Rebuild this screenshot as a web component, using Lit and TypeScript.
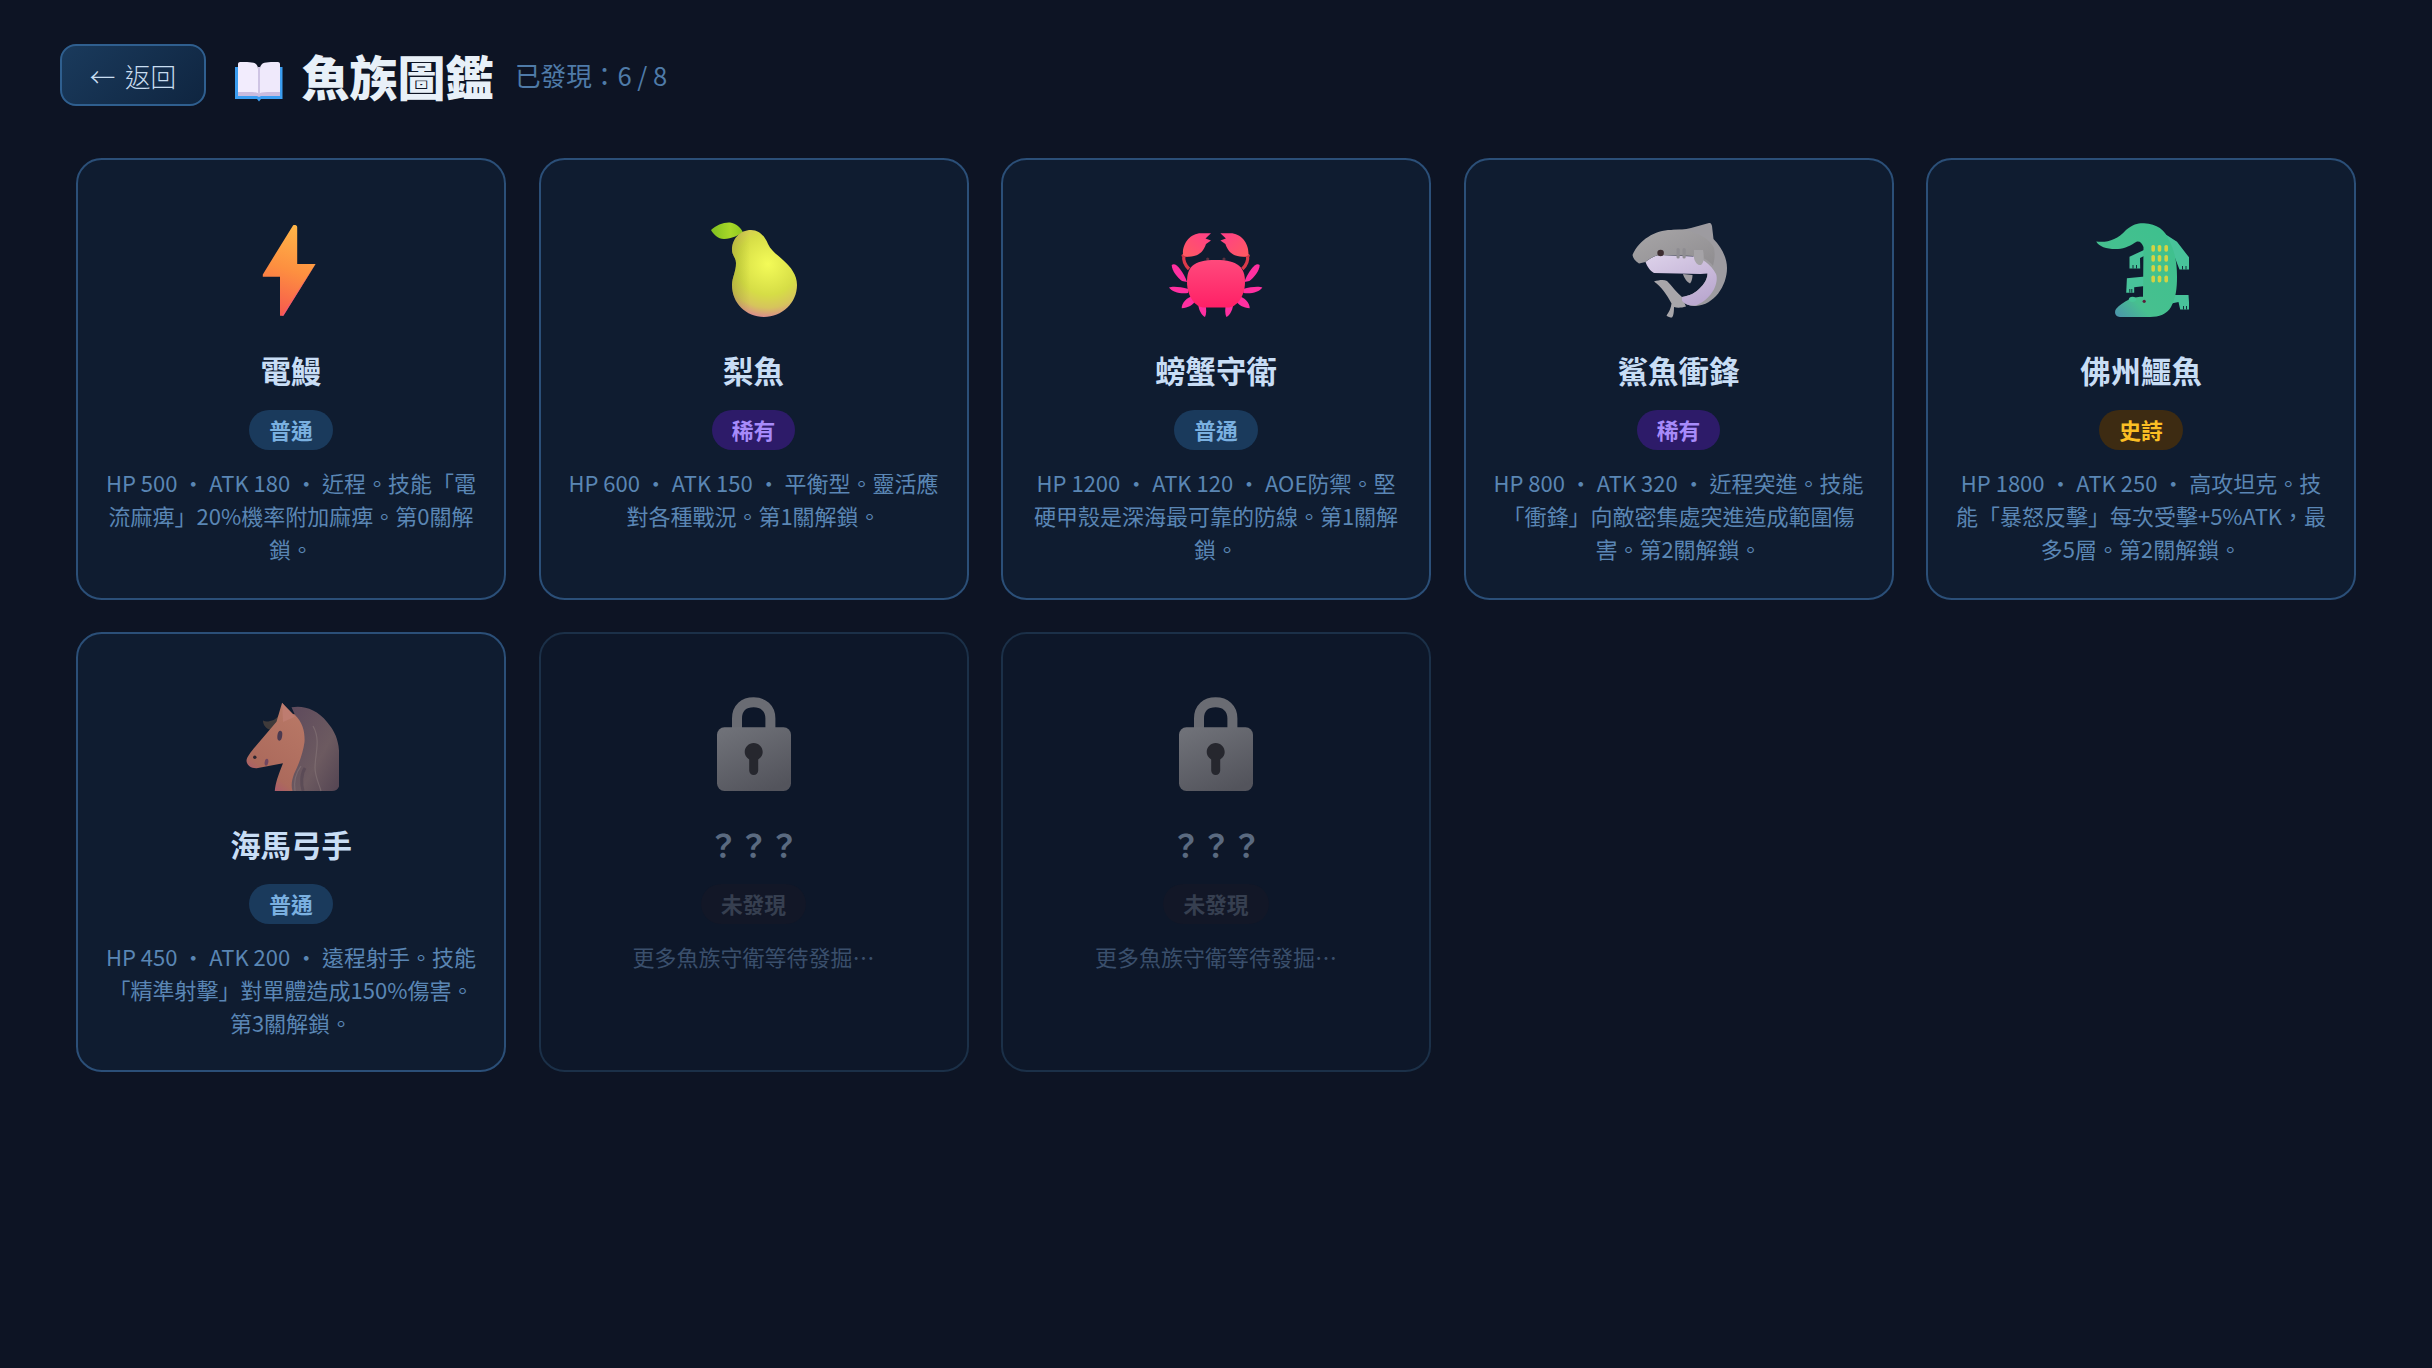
import { LitElement, html, css, svg } from "lit";
import { customElement } from "lit/decorators.js";

const defs = svg`
<svg width="0" height="0" class="defs" aria-hidden="true"><defs>
  <linearGradient id="bolt" x1="0.6" y1="0" x2="0.4" y2="1"><stop offset="0" stop-color="#ffb648"/><stop offset="0.5" stop-color="#fd8f40"/><stop offset="1" stop-color="#f65a4e"/></linearGradient>
  <radialGradient id="pear" gradientUnits="userSpaceOnUse" cx="62" cy="42" r="56"><stop offset="0" stop-color="#f3fb58"/><stop offset="0.55" stop-color="#d6dd46"/><stop offset="0.78" stop-color="#d6c45c"/><stop offset="1" stop-color="#dc7f98"/></radialGradient>
  <linearGradient id="pearShade" x1="0" y1="0" x2="1" y2="0"><stop offset="0" stop-color="#8a9a20" stop-opacity="0.4"/><stop offset="0.28" stop-color="#8a9a20" stop-opacity="0"/></linearGradient>
  <linearGradient id="leaf" x1="0" y1="0" x2="1" y2="0"><stop offset="0" stop-color="#7fbf20"/><stop offset="0.6" stop-color="#a8d828"/><stop offset="1" stop-color="#8ec820"/></linearGradient>
  <linearGradient id="crabBody" x1="0.5" y1="0" x2="0.5" y2="1"><stop offset="0" stop-color="#ff4a7c"/><stop offset="1" stop-color="#ff2066"/></linearGradient>
  <linearGradient id="crabClaw" x1="0" y1="1" x2="1" y2="0"><stop offset="0" stop-color="#ff5a60"/><stop offset="1" stop-color="#ff3f88"/></linearGradient>
  <linearGradient id="sharkTop" x1="0" y1="0" x2="1" y2="1"><stop offset="0" stop-color="#a8a6a8"/><stop offset="1" stop-color="#8f8d90"/></linearGradient>
  <linearGradient id="sharkBelly" x1="0" y1="0" x2="0.6" y2="1"><stop offset="0" stop-color="#ddd2ea"/><stop offset="1" stop-color="#bba9d0"/></linearGradient>
  <linearGradient id="croc" x1="0.9" y1="0.2" x2="0.2" y2="1"><stop offset="0" stop-color="#3fc08e"/><stop offset="0.7" stop-color="#47c08f"/><stop offset="1" stop-color="#4c8fb0"/></linearGradient>
  <linearGradient id="horseSkin" x1="0.7" y1="0" x2="0.2" y2="1"><stop offset="0" stop-color="#b87866"/><stop offset="0.75" stop-color="#ac6a5c"/><stop offset="1" stop-color="#a84e78"/></linearGradient>
  <linearGradient id="mane" x1="0" y1="0" x2="1" y2="1"><stop offset="0" stop-color="#5e4a5c"/><stop offset="0.6" stop-color="#6c5a60"/><stop offset="1" stop-color="#534452"/></linearGradient>
  <linearGradient id="lockBody" x1="0.2" y1="0" x2="0.7" y2="1"><stop offset="0" stop-color="#6f7178"/><stop offset="1" stop-color="#53545c"/></linearGradient>
</defs></svg>`;

const bolt = svg`<svg class="icon" viewBox="0 0 96 96"><path fill="url(#bolt)" d="M50 3.4C51 2.6 54 2.8 54.2 5L54.2 42L72.6 42L40.4 93.8L37 93.8L37 54.7L19.8 54.7L19.8 52.4Z"/><path fill="#f2577a" opacity="0.7" d="M72.6 42L40.4 93.8L38.4 93.8Z"/></svg>`;

const pear = svg`<svg class="icon" viewBox="0 0 96 96">
  <path fill="url(#leaf)" d="M5 8C10 3 18 0 24 .5C30 1 35 6 37 10.500C32 13 26 17 18 17C12 17 7 12 5 8Z"/>
  <path fill="url(#pear)" d="M45 8C54 8 59 15 62 22C65 29 72 33 77 38C85 45 91 53 91 63C91 81 76 95 58 95C40 95 26 81 26 63C26 55 30 50 30 41C30 36 26 33 26 28C26 17 34 8 45 8Z"/>
  <path fill="url(#pearShade)" d="M45 8C54 8 59 15 62 22C65 29 72 33 77 38C85 45 91 53 91 63C91 81 76 95 58 95C40 95 26 81 26 63C26 55 30 50 30 41C30 36 26 33 26 28C26 17 34 8 45 8Z"/>
</svg>`;

const crabSide = svg`
  <path fill="none" stroke="#d93a4a" stroke-width="3.200" d="M16 33C15 38 17 43 21 47"/>
  <rect x="13.500" y="32" width="7" height="3" rx="1.500" fill="#c93848"/>
  <path fill="url(#crabClaw)" d="M15 33C14 22 22 11.300 33 11.300L43 11.300L37.500 16.500L43 18.500L38 22C36 28 32 33 26 34C22 35 17 35 15 33Z"/>
  <g fill="#ff30a0">
    <path d="M3.700 43C6 41 9 43 12 47C15 51 17.500 55 19 60L14 59C9 55 4 49 3.700 43Z"/>
    <path d="M1 65.500C4 64 12 64.500 20.500 67L20 71C12 72 4 70 1 65.500Z"/>
    <path d="M13.700 86.300C13.500 81 19 75 26 73.500L28.500 78C25 83 20 86 13.700 86.300Z"/>
    <path d="M37 95C33.500 93.500 30 87 30 80L37.500 82.500C38.500 87 38.500 92 37 95Z"/>
  </g>`;
const crab = svg`<svg class="icon" viewBox="0 0 96 96">
  ${crabSide}
  <g transform="translate(95.400 0) scale(-1 1)">${crabSide}</g>
  <circle cx="39.700" cy="37" r="1.600" fill="#5a3040"/><circle cx="56" cy="37" r="1.600" fill="#5a3040"/>
  <path fill="url(#crabBody)" d="M19 60C19 46 24 38 47.700 38C71 38 77 46 77 60C77 75 68 85.500 60 85.500L36 85.500C28 85.500 19 75 19 60Z"/>
</svg>`;

const shark = svg`<svg class="icon" viewBox="0 0 96 96">
  <path fill="#a09da2" d="M52 52L61.500 53C61.500 57 60 60.500 59 61.500C56 60 53 56 52 52Z"/>
  <path fill="#a8a6aa" d="M23 59.500C28 58 33 57.500 36 59C41 64 46 71 51 75L55 84.500C50 86 46 86 43 85C43 90 42.500 94 41 95.500C39 95.500 37 95 35.500 93.500C38 90 40 86 40.500 81.500C36 73 30 64 23 59.500Z"/>
  <path fill="#9d9ba0" d="M40 8C47 7.500 54 8 60 6L78 1C80 .5 80.500 2 81 4L82.500 17C91 26 96 36 96 46C96 64 83 83 65 84C60 84.500 55 83 51 79L51 75C58 74 65 71 70 65C75 60 76.500 55 76.500 51L50 20Z"/>
  <path fill="url(#sharkBelly)" d="M14.500 40C18 37 24 33 29 33L63 34.500C70 36 80 42 85 52C88 60 82 76 66 83C60 84.500 55 83 51 79L51 75C58 74 65 71 70 65C75 60 76.500 55 76.500 51.500L69.500 52L23 51C19 49 16 44 14.500 40Z"/>
  <path fill="url(#sharkTop)" d="M1.500 33C8 18 24 8 40 8C58 6 78 14 83 26C84 32 84 36 82 44C78 38 70 34 63 34L29 33C24 33 18 37 14.500 40L8 41.500C4 39 2 36 1.500 33Z"/>
  <path fill="#a5a3a7" d="M63 28L72 28C73 34 73.500 40 70 43C66 43.500 64 40 63 36Z"/>
  <circle cx="29.600" cy="31" r="3.300" fill="#3c2c30"/>
  <rect x="45.500" y="26" width="3.200" height="10.500" rx="1.600" fill="#8f8d92"/>
  <rect x="51.500" y="26" width="3.200" height="10.500" rx="1.600" fill="#8f8d92"/>
</svg>`;

const scutes = [60.2, 66.5, 73.2].flatMap((x) =>
  [26.3, 36.3, 46.3, 57].map((y) =>
    svg`<rect x="${x - 1.8}" y="${y - 3.4}" width="3.600" height="6.800" rx="1.600" fill="#d3d243"/>`
  )
);
const croc = svg`<svg class="icon" viewBox="0 0 96 96">
  <g fill="#48c39a">
    <path d="M72 12L84 19.700L96.500 36L96.500 47.500L86.500 47.500L82 36L76 34Z"/>
    <path d="M51 28L36.500 34.700L36.500 46.500L47.200 46.500L47 36L51 34Z"/>
    <path d="M52 54.500L33.900 56.300L33.200 70.700L41.200 70.700L41.200 65.300L52 64Z"/>
    <path d="M80 73L95.500 73L96.500 87.500L87.200 87.500L85.500 80L76 82Z"/>
  </g>
  <g stroke="#0f1c30" stroke-width="0.900">
    <path d="M89.500 44L89.500 47.500M93 44L93 47.500M40 43L40 46.500M43.500 43L43.500 46.500M36.800 67L36.800 70.700M38.800 67L38.800 70.700M90.500 84L90.500 87.500M93.500 84L93.500 87.500"/>
  </g>
  <path fill="url(#croc)" d="M3.200 19.500C14 21 24 18 33 8C40 2 46 1 51 1.300C64 2 72 8 76 18C82 30 84 40 84 55C84 66 83 76 78 85C74 92 66 95 57 95L27 95C22 94.500 21 90 23 87C26 83 31 80 37 77C42 75 46 74.700 50 74.700L50.500 25C49 21 47 19 44 19.500C38 23 32 27 25 27C15 27.500 6 25 3.200 19.500Z"/>
  <ellipse cx="39.500" cy="77.300" rx="3.600" ry="2.600" fill="#48c598"/>
  <circle cx="51.200" cy="79.300" r="1.600" fill="#5a1f3a"/>
  ${scutes}
</svg>`;

const horse = svg`<svg class="icon" viewBox="0 0 96 96">
  <path fill="#3f3a3a" d="M38 13C37 20 33 24 27 25C24 26 22 25.500 20 24.500C20 29 23 33 28 34C33 33 37 28 41 22Z"/>
  <path fill="url(#horseSkin)" d="M39 7L50 18L62 20L62 95L31.800 95C32.500 87 35 80 40 67.300L15 72C9 73 4 70 3.500 65C3.500 61 8 56 12 51L33.500 25.700Z"/>
  <path fill="#be7c70" d="M39 6.700L52 20.700L40 26Z"/>
  <path fill="url(#mane)" d="M48.500 11.300C60 9 74 13 84 26C90 33 94 40 95.500 50C96.800 60 96.800 75 96.500 88C96 93 93 95 89 95L49.500 95C48 90 48.500 85 51 78C56 68 60 57 61.500 46C62 36 60 27 52 19Z"/>
  <g fill="none" stroke="#8a7a7c" stroke-width="1.200" opacity="0.55">
    <path d="M70 30C78 44 72 58 72 72C72 80 76 88 78 95"/>
    <path d="M58 70C52 78 51 88 52 95"/>
  </g>
  <g fill="none" stroke="#4a3c4c" stroke-width="3" opacity="0.45"><path d="M62 72C58 78 58 88 60 95"/></g>
  <ellipse cx="36.800" cy="39.700" rx="2.400" ry="5" fill="#4b3a50" transform="rotate(8 36.800 39.700)"/>
  <circle cx="11.800" cy="61.300" r="1.700" fill="#2e2630"/>
  <ellipse cx="23.500" cy="66.300" rx="1.800" ry="3.600" fill="#6e4660" transform="rotate(10 23.500 66.300)"/>
</svg>`;

const lock = svg`<svg class="icon" viewBox="0 0 96 96">
  <path fill="none" stroke="#6a6c73" stroke-width="10" d="M31 34L31 22.500C31 12 38 6.300 47.700 6.300C57 6.300 64.400 12 64.400 22.500L64.400 34"/>
  <rect x="11" y="31.300" width="74" height="63.700" rx="7.500" fill="url(#lockBody)"/>
  <path fill="#26272e" d="M47.700 47C52.700 47 56.700 51 56.700 56C56.700 59 55.500 61 52.200 63.500L52.200 74.500C52.200 77 50.200 79 47.700 79C45.200 79 43.200 77 43.200 74.500L43.200 63.500C40 61 38.700 59 38.700 56C38.700 51 42.700 47 47.700 47Z"/>
</svg>`;

const book = svg`<svg class="book" viewBox="0 0 48 40">
  <path fill="#3b9df0" d="M0 5L3 5L3 32L45 32L45 5L47.500 5L47.500 37L26 37L24 39.500L22 37L0 37Z"/>
  <path fill="#c9bcdf" d="M3 28L24 30L45 28L45 34L26 34L24 35L22 34L3 34Z"/>
  <path fill="#f2ecfd" d="M5 0C11 0 19 0 21 2C22.500 3.500 23 5 23 7L23 31C20 29.500 11 30 3 30L3 2C3 .8 4 0 5 0Z"/>
  <path fill="#efe9fb" d="M43 0C37 0 29 0 27 2C25.500 3.500 25 5 25 7L25 31C28 29.500 37 30 45 30L45 2C45 .8 44 0 43 0Z"/>
  <path fill="#cfc4e4" d="M23 5L25 5L25 32L23 32Z"/>
</svg>`;

type Tier = "common" | "rare" | "epic";
const tierLabel: Record<Tier, string> = { common: "普通", rare: "稀有", epic: "史詩" };

const fish = [
  { icon: bolt, name: "電鰻", tier: "common" as Tier, desc: "HP 500 ・ ATK 180 ・ 近程。技能「電流麻痺」20%機率附加麻痺。第0關解鎖。" },
  { icon: pear, name: "梨魚", tier: "rare" as Tier, desc: "HP 600 ・ ATK 150 ・ 平衡型。靈活應對各種戰況。第1關解鎖。" },
  { icon: crab, name: "螃蟹守衛", tier: "common" as Tier, desc: "HP 1200 ・ ATK 120 ・ AOE防禦。堅硬甲殼是深海最可靠的防線。第1關解鎖。" },
  { icon: shark, name: "鯊魚衝鋒", tier: "rare" as Tier, desc: "HP 800 ・ ATK 320 ・ 近程突進。技能「衝鋒」向敵密集處突進造成範圍傷害。第2關解鎖。" },
  { icon: croc, name: "佛州鱷魚", tier: "epic" as Tier, desc: "HP 1800 ・ ATK 250 ・ 高攻坦克。技能「暴怒反擊」每次受擊+5%ATK，最多5層。第2關解鎖。" },
  { icon: horse, name: "海馬弓手", tier: "common" as Tier, desc: "HP 450 ・ ATK 200 ・ 遠程射手。技能「精準射擊」對單體造成150%傷害。第3關解鎖。" },
];

@customElement("app-root")
export class AppRoot extends LitElement {
  static styles = css`
    :host {
      display: block;
      min-height: 100vh;
      background: #0d1424;
      font-family: "Noto Sans CJK TC", "Noto Sans", sans-serif;
    }
    .defs { position: absolute; }
    .page { padding: 44px 60px; box-sizing: border-box; }
    .header { display: flex; align-items: center; height: 62px; }
    .back {
      box-sizing: border-box;
      width: 146px;
      height: 62px;
      border: 2px solid #2f5f8f;
      border-radius: 16px;
      background: linear-gradient(135deg, #1a3a5c, #0f2540);
      color: #c8ddf0;
      font-family: inherit;
      font-size: 25.6px;
      font-weight: 300;
      word-spacing: 4px;
      padding: 0;
    }
    .title {
      display: flex;
      align-items: center;
      gap: 18.5px;
      margin: 0 0 0 29px;
      font-size: 48px;
      font-weight: 900;
      color: #e8f0f8;
      line-height: 1;
    }
    .book { width: 48px; height: 40px; margin-top: 14px; }
    .count { margin-left: 21.5px; margin-top: -1px; font-size: 25.6px; color: #4f7ba8; }
    .grid {
      display: grid;
      grid-template-columns: repeat(5, 1fr);
      grid-template-rows: 442px 440px;
      column-gap: 32.5px;
      row-gap: 32px;
      margin: 52px 16px 0;
    }
    .card {
      box-sizing: border-box;
      border: 2px solid #2b4f78;
      border-radius: 25.6px;
      background: #0f1c30;
      padding: 62px 26px 0;
      display: flex;
      flex-direction: column;
      align-items: center;
      text-align: center;
    }
    .card.locked { border-color: #1b3048; background: #0d1729; }
    .icon { width: 96px; height: 96px; display: block; flex: none; }
    .name {
      margin-top: 28.5px;
      font-size: 30.4px;
      font-weight: 700;
      line-height: 46px;
      color: #c8ddf5;
    }
    .locked .name { color: #5a6a80; }
    .badge {
      margin-top: 17.5px;
      padding: 0 20px;
      height: 40px;
      line-height: 40px;
      border-radius: 20px;
      font-size: 21.76px;
      font-weight: 700;
    }
    .common { background: #1a3a5c; color: #7ab0e0; }
    .rare { background: #2d1b69; color: #a78bfa; }
    .epic { background: #3d2b12; color: #fbbf24; }
    .unknown { background: #121727; color: #363f50; }
    .desc {
      margin: 15.5px 0 0;
      font-size: 22px;
      line-height: 33px;
      color: #5a86b4;
    }
    .locked .desc { color: #3a4f6c; }
  `;

  render() {
    return html`
      ${defs}
      <div class="page">
        <header class="header">
          <button class="back">← 返回</button>
          <h1 class="title">${book}<span>魚族圖鑑</span></h1>
          <span class="count">已發現：6 / 8</span>
        </header>
        <section class="grid">
          ${fish.map(
            (f) => html`
              <article class="card">
                ${f.icon}
                <div class="name">${f.name}</div>
                <div class="badge ${f.tier}">${tierLabel[f.tier]}</div>
                <p class="desc">${f.desc}</p>
              </article>
            `
          )}
          ${[0, 1].map(
            () => html`
              <article class="card locked">
                ${lock}
                <div class="name">？？？</div>
                <div class="badge unknown">未發現</div>
                <p class="desc">更多魚族守衛等待發掘…</p>
              </article>
            `
          )}
        </section>
      </div>
    `;
  }
}
